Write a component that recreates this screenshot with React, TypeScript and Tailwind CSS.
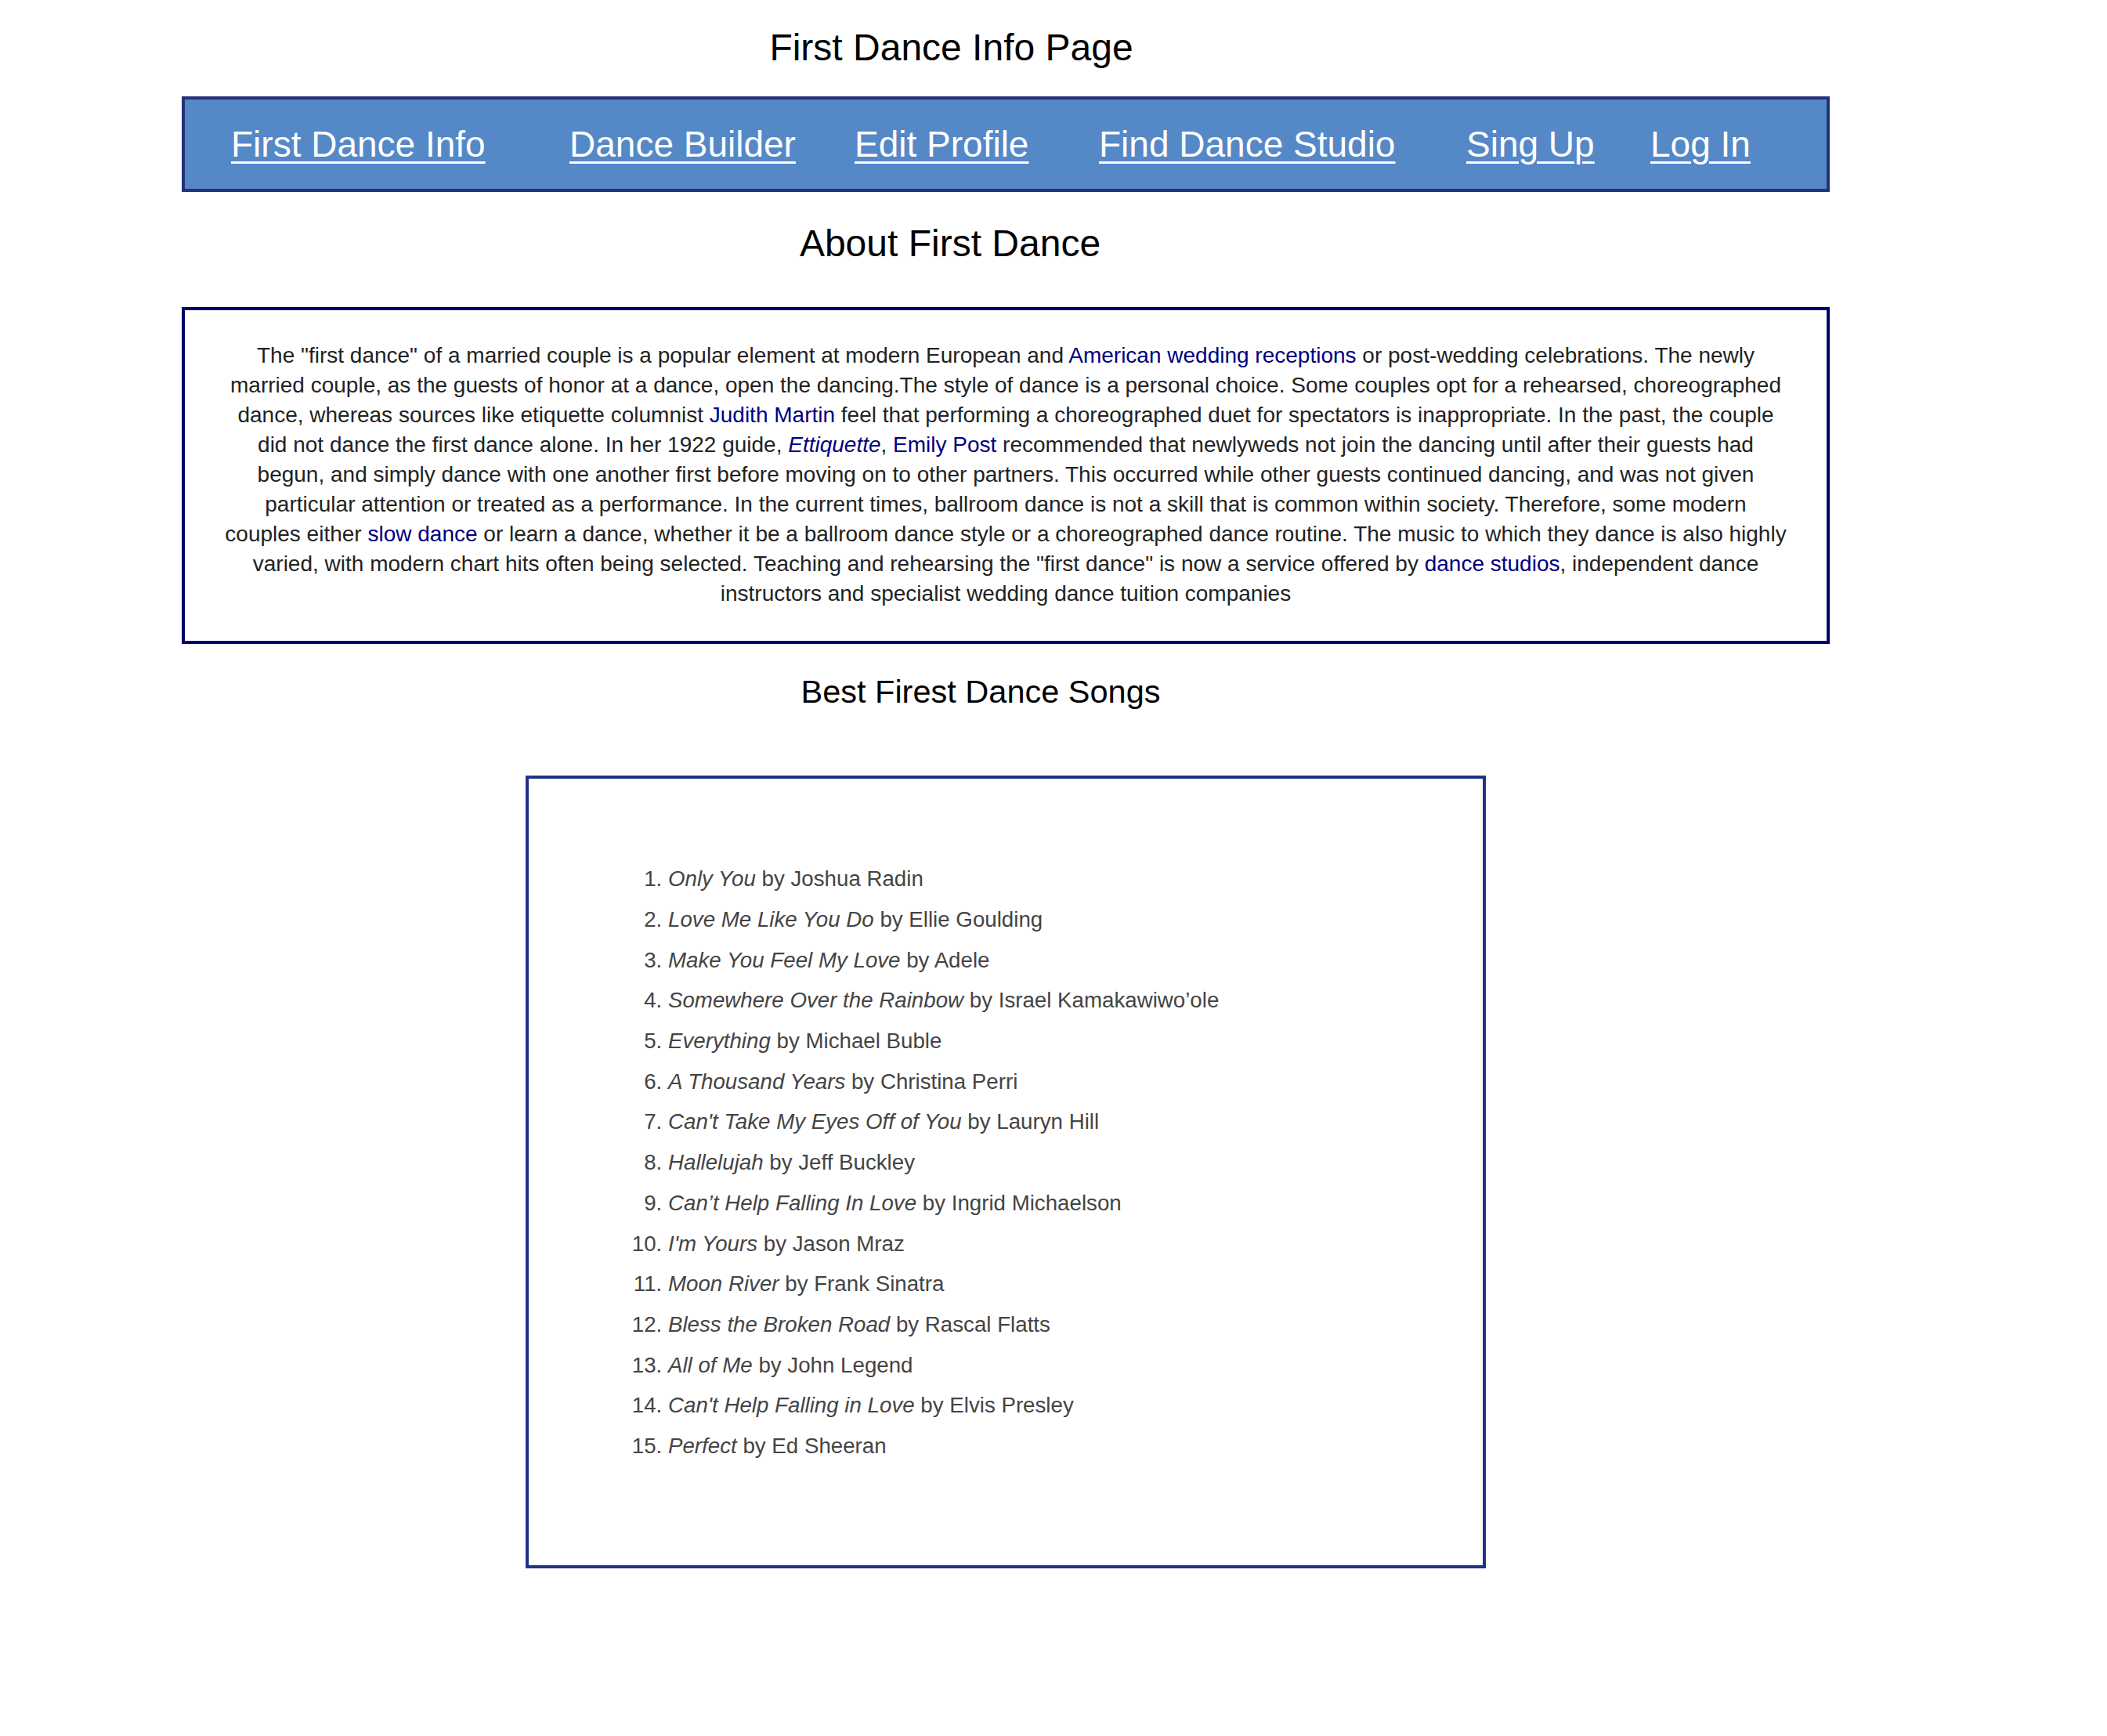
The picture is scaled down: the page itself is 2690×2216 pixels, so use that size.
import React from "react";

const navLinks: { label: string; w: string }[] = [
  { label: "First Dance Info", w: "w-[432px]" },
  { label: "Dance Builder", w: "w-[364px]" },
  { label: "Edit Profile", w: "w-[312px]" },
  { label: "Find Dance Studio", w: "w-[469px]" },
  { label: "Sing Up", w: "w-[235px]" },
  { label: "Log In", w: "w-[200px]" },
];

const songs: [string, string][] = [
  ["Only You", "Joshua Radin"],
  ["Love Me Like You Do", "Ellie Goulding"],
  ["Make You Feel My Love", "Adele"],
  ["Somewhere Over the Rainbow", "Israel Kamakawiwo\u2019ole"],
  ["Everything", "Michael Buble"],
  ["A Thousand Years", "Christina Perri"],
  ["Can't Take My Eyes Off of You", "Lauryn Hill"],
  ["Hallelujah", "Jeff Buckley"],
  ["Can\u2019t Help Falling In Love", "Ingrid Michaelson"],
  ["I'm Yours", "Jason Mraz"],
  ["Moon River", "Frank Sinatra"],
  ["Bless the Broken Road", "Rascal Flatts"],
  ["All of Me", "John Legend"],
  ["Can't Help Falling in Love", "Elvis Presley"],
  ["Perfect", "Ed Sheeran"],
];

function L({ children }: { children: React.ReactNode }) {
  return <a className="text-[#000080] no-underline">{children}</a>;
}

export default function App() {
  return (
    <div className="min-h-[2216px] bg-white font-['Liberation_Sans',Arial,sans-serif] text-black pt-[25px]">
      <div className="ml-[232px] w-[2104px]">
        <h1 className="text-center text-[48px] font-normal leading-normal pr-[139px]">
          First Dance Info Page
        </h1>

        <nav className="mt-[26px] h-[122px] border-4 border-[#22327b] bg-[#5588c7] flex items-center pl-[59px]">
          {navLinks.map((l) => (
            <div key={l.label} className={`${l.w} shrink-0`}>
              <a className="text-white text-[46px] leading-normal underline decoration-[3px] underline-offset-[6px] font-['Comic_Sans_MS','Liberation_Sans',sans-serif]">
                {l.label}
              </a>
            </div>
          ))}
        </nav>

        <h2 className="mt-[30px] text-center text-[48px] font-normal leading-normal pr-[142px]">
          About First Dance
        </h2>

        <div className="mt-[45px] border-4 border-[#000066] px-[20px] pt-[39px] pb-[41px]">
          <p className="text-center text-[28px] leading-[38px] text-[#222] whitespace-nowrap">
            The "first dance" of a married couple is a popular element at modern European and{" "}
            <L>American wedding receptions</L> or post-wedding celebrations. The newly
            <br />
            married couple, as the guests of honor at a dance, open the dancing.The style of dance is a personal
            choice. Some couples opt for a rehearsed, choreographed
            <br />
            dance, whereas sources like etiquette columnist <L>Judith Martin</L> feel that performing a
            choreographed duet for spectators is inappropriate. In the past, the couple
            <br />
            did not dance the first dance alone. In her 1922 guide,{" "}
            <L>
              <i>Ettiquette</i>
            </L>
            , <L>Emily Post</L> recommended that newlyweds not join the dancing until after their guests had
            <br />
            begun, and simply dance with one another first before moving on to other partners. This occurred
            while other guests continued dancing, and was not given
            <br />
            particular attention or treated as a performance. In the current times, ballroom dance is not a skill
            that is common within society. Therefore, some modern
            <br />
            couples either <L>slow dance</L> or learn a dance, whether it be a ballroom dance style or a
            choreographed dance routine. The music to which they dance is also highly
            <br />
            varied, with modern chart hits often being selected. Teaching and rehearsing the "first dance" is now
            a service offered by <L>dance studios</L>, independent dance
            <br />
            instructors and specialist wedding dance tuition companies
          </p>
        </div>

        <h2 className="mt-[30px] text-center text-[41.5px] font-normal leading-normal pr-[64px]">
          Best Firest Dance Songs
        </h2>

        <div className="mt-[76px] mx-auto w-[1226px] border-4 border-[#213385] pt-[102px] pb-[126px]">
          <ol className="list-decimal list-outside pl-[178px] text-[27.7px] leading-[51.7px] text-[#444]">
            {songs.map(([t, a]) => (
              <li key={t}>
                <i>{t}</i> by {a}
              </li>
            ))}
          </ol>
        </div>
      </div>
    </div>
  );
}
